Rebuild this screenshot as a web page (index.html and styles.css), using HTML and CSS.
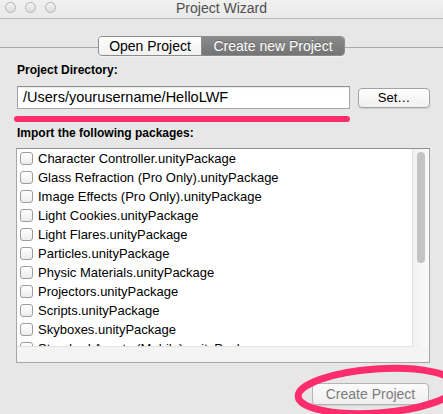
FILE: index.html
```html
<!DOCTYPE html>
<html>
<head>
<meta charset="utf-8">
<title>Project Wizard</title>
<link rel="stylesheet" href="styles.css">
</head>
<body>
<div class="window">
  <div class="titlebar">
    <div class="lights">
      <span class="light"></span><span class="light"></span><span class="light"></span>
    </div>
    <div class="title">Project Wizard</div>
    <div></div>
  </div>
  <div class="tabbar">
    <div class="rule"></div>
    <div class="seg">
      <div class="tab">Open Project</div>
      <div class="tab active">Create new Project</div>
    </div>
    <div class="rule"></div>
  </div>
  <div class="content">
    <div class="label first">Project Directory:</div>
    <div class="dir-row">
      <div class="field">/Users/yourusername/HelloLWF</div>
      <button class="btn set">Set…</button>
    </div>
    <div class="mark"></div>
    <div class="label second">Import the following packages:</div>
    <div class="listbox">
      <div class="listmain">
        <ul class="items">
          <li><span class="check"></span>Character Controller.unityPackage</li>
          <li><span class="check"></span>Glass Refraction (Pro Only).unityPackage</li>
          <li><span class="check"></span>Image Effects (Pro Only).unityPackage</li>
          <li><span class="check"></span>Light Cookies.unityPackage</li>
          <li><span class="check"></span>Light Flares.unityPackage</li>
          <li><span class="check"></span>Particles.unityPackage</li>
          <li><span class="check"></span>Physic Materials.unityPackage</li>
          <li><span class="check"></span>Projectors.unityPackage</li>
          <li><span class="check"></span>Scripts.unityPackage</li>
          <li><span class="check"></span>Skyboxes.unityPackage</li>
          <li><span class="check"></span>Standard Assets (Mobile).unityPackage</li>
        </ul>
        <div class="vscroll"><div class="thumb"></div></div>
      </div>
      <div class="hstrip"></div>
    </div>
    <div class="footer">
      <button class="btn create">Create Project</button>
    </div>
  </div>
  <svg class="loop" width="443" height="414" viewBox="0 0 443 414">
    <ellipse cx="377" cy="391" rx="79" ry="22" transform="rotate(-4 377 391)" fill="none" stroke="#fd2c6c" stroke-width="7"/>
  </svg>
</div>
</body>
</html>
```

FILE: styles.css
```css
* { box-sizing: border-box; }
html, body { margin: 0; padding: 0; }
body {
  width: 443px;
  height: 414px;
  overflow: hidden;
  background: #e7e7e7;
  font-family: "Liberation Sans", Arial, sans-serif;
  color: #000;
}
.window {
  position: relative;
  width: 443px;
  height: 414px;
}
.titlebar {
  height: 19px;
  display: grid;
  grid-template-columns: 1fr auto 1fr;
  align-items: start;
  background: linear-gradient(#f0f0f0, #e9e9e9);
  border-bottom: 1px solid #b9b9b9;
}
.lights {
  display: flex;
  gap: 9px;
  padding: 2px 0 0 5px;
}
.light {
  width: 11px;
  height: 11px;
  border-radius: 50%;
  border: 1px solid #b3b3b3;
  background: linear-gradient(#f3f3f3, #dddddd);
}
.title {
  font-size: 14px;
  line-height: 16px;
  color: #4e4e4e;
  padding-top: 0;
}
.tabbar {
  display: flex;
  padding-top: 17px;
}
.rule {
  flex: 1;
  height: 1px;
  margin-top: 11px;
  background: #a9a9a9;
}
.seg {
  display: flex;
  height: 20px;
  border: 1px solid #8c8c8c;
  border-radius: 4px;
  overflow: hidden;
  box-shadow: 0 1px 0 rgba(255,255,255,0.5);
}
.tab {
  font-size: 14px;
  line-height: 18px;
  text-align: center;
  padding: 0;
}
.tab:first-child {
  width: 103px;
  background: linear-gradient(#ffffff, #f1f1f1);
  border-right: 1px solid #8c8c8c;
}
.tab.active {
  width: 142px;
  color: #fff;
  background: linear-gradient(#8a8a8a, #747474);
  text-shadow: 0 -1px 0 rgba(0,0,0,0.25);
}
.content {
  padding: 0 13px 0 17px;
}
.label {
  font-size: 12px;
  font-weight: bold;
  line-height: 14px;
}
.label.first { margin-top: 7px; }
.label.second { margin-top: 4px; }
.dir-row {
  display: flex;
  align-items: center;
  gap: 8px;
  margin-top: 9px;
}
.field {
  width: 333px;
  height: 23px;
  border: 1px solid #a4a4a4;
  border-top-color: #8e8e8e;
  background: #fff;
  font-size: 14.5px;
  line-height: 21px;
  padding-left: 5px;
  box-shadow: inset 0 1px 1px rgba(0,0,0,0.08);
}
.btn {
  font-family: inherit;
  font-size: 14px;
  border: 1px solid #a2a2a2;
  border-radius: 4px;
  background: linear-gradient(#ffffff, #f0f0f0);
  box-shadow: 0 1px 1px rgba(0,0,0,0.1);
  padding: 0;
  margin: 0;
}
.btn.set {
  width: 72px;
  height: 20px;
  line-height: 18px;
  font-size: 13px;
  color: #000;
}
.mark {
  margin: 7px 0 0 -3px;
  width: 336px;
  height: 6px;
  border-radius: 3px;
  background: #fd2c6c;
}
.listbox {
  margin: 8px 0 0 -1px;
  width: 414px;
  height: 215px;
  border: 1px solid #a6a6a6;
  border-top-color: #8f8f8f;
  background: #f4f4f4;
  display: flex;
  flex-direction: column;
}
.listmain {
  display: flex;
  height: 198px;
}
.items {
  list-style: none;
  margin: 0;
  padding: 0;
  flex: 1;
  background: #fff;
  overflow: hidden;
  border-right: 1px solid #e2e2e2;
  border-bottom: 1px solid #e2e2e2;
}
.items li {
  height: 19px;
  display: flex;
  align-items: center;
  font-size: 13px;
  white-space: nowrap;
}
.check {
  width: 13px;
  height: 13px;
  margin: 0 5px 0 3px;
  border: 1px solid #9c9c9c;
  border-radius: 3px;
  background: linear-gradient(#ffffff, #ececec);
  flex: none;
}
.vscroll {
  width: 16px;
  background: linear-gradient(90deg, #f0f0f0, #fafafa);
  padding: 3px 4px 0 4px;
}
.thumb {
  width: 8px;
  height: 111px;
  border-radius: 4px;
  background: #c3c3c3;
}
.hstrip {
  flex: 1;
}
.footer {
  display: flex;
  justify-content: flex-end;
  margin-top: 20px;
  padding-right: 1px;
}
.btn.create {
  width: 117px;
  height: 22px;
  line-height: 20px;
  color: #7c7c7c;
  background: linear-gradient(#fbfbfb, #efefef);
  border-color: #b4b4b4;
}
.loop {
  position: absolute;
  left: 0;
  top: 0;
  pointer-events: none;
}
```
